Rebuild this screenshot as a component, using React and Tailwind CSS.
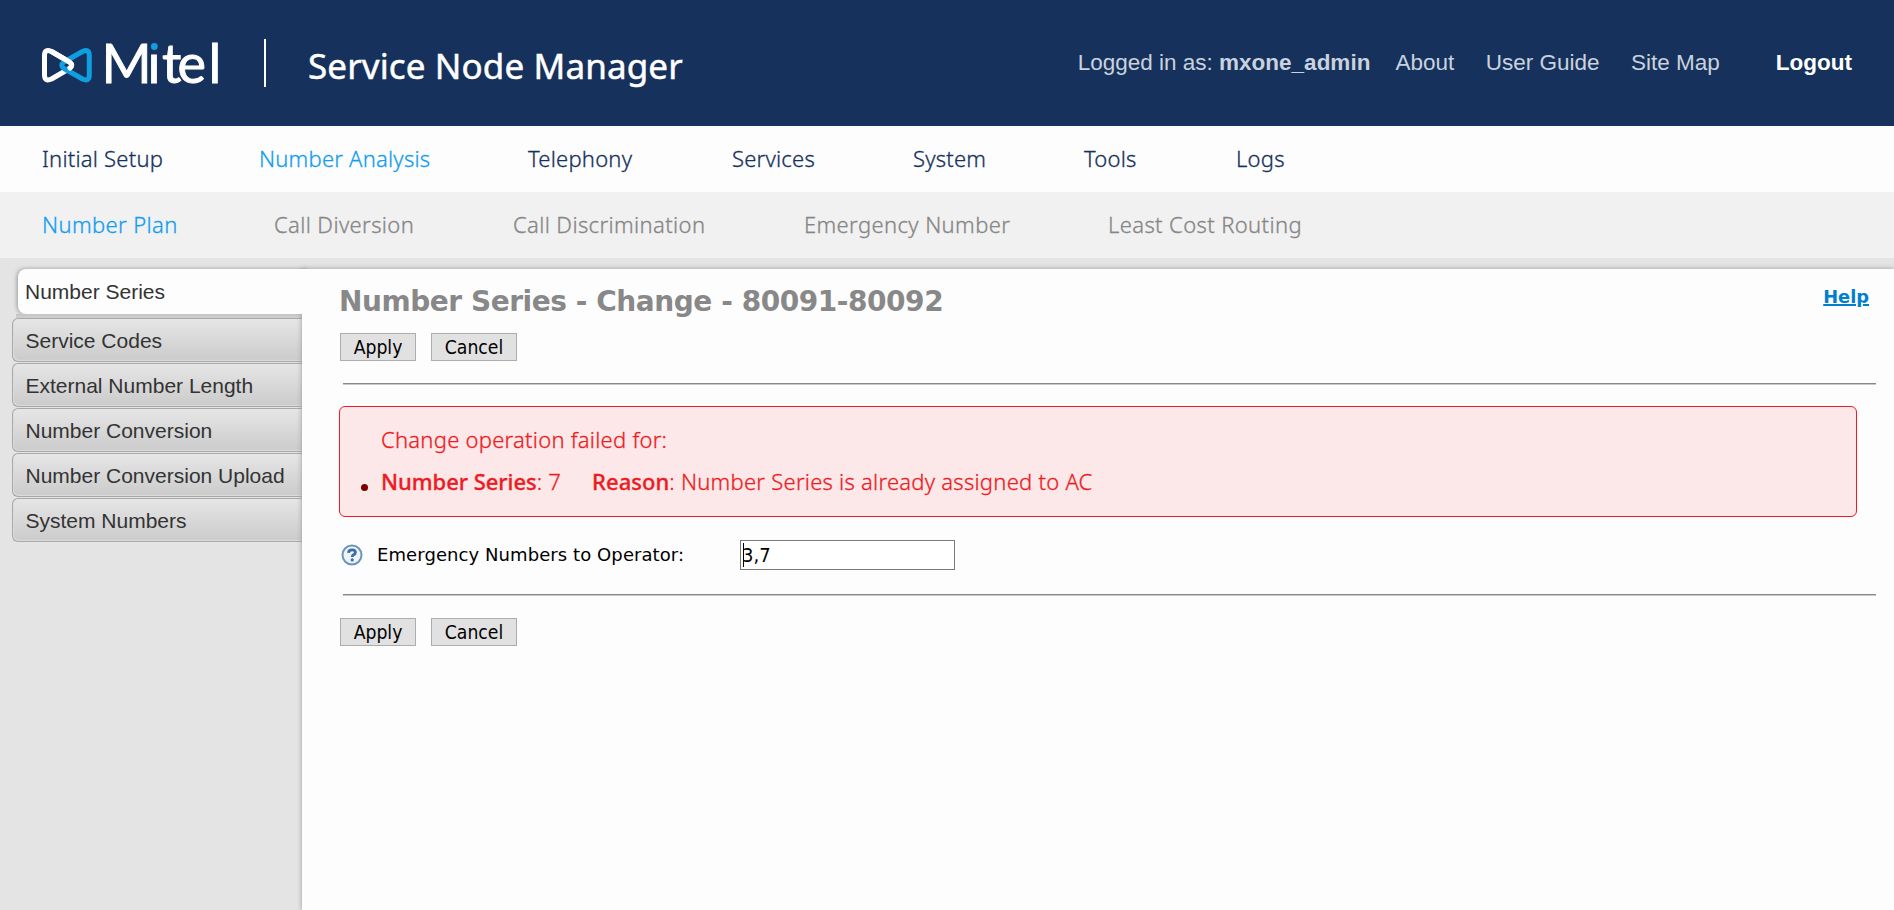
const PRIMARY = [
  { label: 'Initial Setup', width: 'w-[217px]' },
  { label: 'Number Analysis', width: 'w-[269px]', active: true },
  { label: 'Telephony', width: 'w-[204px]' },
  { label: 'Services', width: 'w-[181px]' },
  { label: 'System', width: 'w-[171px]' },
  { label: 'Tools', width: 'w-[152px]' },
  { label: 'Logs', width: 'w-[100px]' },
];

const SECONDARY = [
  { label: 'Number Plan', width: 'w-[232px]', active: true },
  { label: 'Call Diversion', width: 'w-[239px]' },
  { label: 'Call Discrimination', width: 'w-[291px]' },
  { label: 'Emergency Number', width: 'w-[304px]' },
  { label: 'Least Cost Routing', width: 'w-[260px]' },
];

const TABS = [
  'Service Codes',
  'External Number Length',
  'Number Conversion',
  'Number Conversion Upload',
  'System Numbers',
];

function Logo() {
  return (
    <svg width="184" height="64" viewBox="0 -6 184 64" fill="none" className="overflow-visible" aria-label="Mitel">
      <g strokeWidth="5" strokeLinejoin="round" strokeLinecap="round">
        <path d="M9.500 14.500 L27.500 25 Q32 28.300 27.500 31.500 L9.500 42 Q2.500 45 2.500 38 V18.500 Q2.500 11.500 9.500 14.500 Z" stroke="#fff" />
        <path d="M40.500 14.500 L22 25 Q17.500 28.300 22 31.500 L40.500 42 Q47.300 45 47.300 38 V18.500 Q47.300 11.500 40.500 14.500 Z" stroke="#0f9ee0" />
        <path d="M9.500 14.500 L27.500 25 Q31.500 28 28 31" stroke="#fff" />
      </g>
      <text
        x="59.500 105.500 120 135.500 166.500"
        y="45.500"
        fill="#fff"
        stroke="#fff"
        strokeWidth="0.900"
        className="font-['Lato',sans-serif] text-[54px]"
      >
        Mitel
      </text>
      <rect x="107" y="3" width="10.500" height="12" fill="#16325c" />
      <circle cx="112.300" cy="9.500" r="3.400" fill="#0f9ee0" />
    </svg>
  );
}

function Header() {
  return (
    <header className="flex h-[126px] items-center bg-[#16325c] pr-[42px] pl-[42px] font-['Liberation_Sans',Arial,sans-serif] text-[22.5px] text-[#c9d2de]">
      <Logo />
      <div className="ml-[38px] h-12 w-0.5 bg-white" />
      <h1 className="mt-[6px] ml-[42px] font-['Noto_Sans',sans-serif] text-[35px] tracking-[0.12px] whitespace-nowrap text-white [-webkit-text-stroke:0.5px]">
        Service Node Manager
      </h1>
      <div className="ml-auto flex whitespace-nowrap">
        <span>
          Logged in as: <b>mxone_admin</b>
        </span>
        <a className="ml-[25px]">About</a>
        <a className="ml-[31.5px]">User Guide</a>
        <a className="ml-[31.5px]">Site Map</a>
        <a className="ml-[56px] font-bold text-white">Logout</a>
      </div>
    </header>
  );
}

function Nav({ items, className, activeColor }) {
  return (
    <nav
      className={`flex h-[66px] pl-[42px] font-['Noto_Sans',sans-serif] text-[22px] leading-[64px] font-light whitespace-nowrap [-webkit-text-stroke:0.3px] ${className}`}
    >
      {items.map((item) => (
        <a key={item.label} className={`${item.width} ${item.active ? activeColor : ''}`}>
          {item.label}
        </a>
      ))}
    </nav>
  );
}

function Sidebar() {
  return (
    <aside className="w-[302px] shrink-0 pt-[11px] font-['Liberation_Sans',Arial,sans-serif] text-[21px] whitespace-nowrap text-[#333]">
      <div className="relative z-10 -mr-1.5 ml-[18px] h-[45px] rounded-l-lg bg-[#fdfdfd] pl-[7px] leading-[45px] shadow-[-1px_0_4px_#999] [clip-path:inset(-6px_0_0_-6px)]">
        Number Series
      </div>
      <div className="ml-4 h-1 bg-linear-to-b from-[#c4c4c4] to-[#d0d0d0]" />
      <div className="ml-3 flex flex-col gap-px">
        {TABS.map((tab) => (
          <div
            key={tab}
            className="h-11 rounded-l-md border border-r-0 border-[#a8a8a8] bg-linear-to-b from-[#e6e6e6] to-[#cbcbcb] pl-[12.5px] leading-[44px] shadow-[inset_1px_-1px_1px_#dcdcdc]"
          >
            {tab}
          </div>
        ))}
      </div>
    </aside>
  );
}

function Button({ children, className }) {
  return (
    <button
      className={`h-7 border border-[#adadad] bg-[#e1e1e1] pt-px font-['DejaVu_Sans_Condensed','DejaVu_Sans',sans-serif] text-[19.2px] leading-[25px] text-black ${className}`}
    >
      {children}
    </button>
  );
}

function Actions() {
  return (
    <div className="flex gap-[15px]">
      <Button className="w-[76px]">Apply</Button>
      <Button className="w-[86px]">Cancel</Button>
    </div>
  );
}

function Rule() {
  return <div className="ml-[3px] h-0.5 w-[1533px] border-t border-[#888] bg-[#c8c8c8]" />;
}

function Alert() {
  return (
    <div className="mt-[21px] -ml-px h-[111px] w-[1518px] rounded-md border border-[#ed1c24] bg-[#fce8e8] pl-[41px] font-['Noto_Sans',sans-serif] text-[22px] font-light tracking-[0.25px] whitespace-nowrap text-[#ed1c24] [-webkit-text-stroke:0.3px]">
      <p className="mt-[12px] h-[42px] leading-[40px]">Change operation failed for:</p>
      <div className="flex leading-[40px]">
        <span className="mt-[23px] mr-[13px] -ml-[20px] size-[7px] rounded-full bg-[#7a0000]" />
        <p className="w-[211px]">
          <b className="font-medium tracking-[-0.05px]">Number Series</b>: 7
        </p>
        <p>
          <b className="font-medium tracking-[0.05px]">Reason</b>: Number Series is already assigned to AC
        </p>
      </div>
    </div>
  );
}

function HelpIcon() {
  return (
    <svg width="22" height="22" viewBox="0 0 22 22" fill="none">
      <circle cx="11" cy="11" r="9.500" fill="#eef4f9" stroke="#6a95bd" strokeWidth="2" />
      <path d="M7.500 8.800 Q7.700 5.900 11.100 5.900 Q14.400 5.900 14.400 8.400 Q14.400 9.800 12.500 10.700 Q11.200 11.500 11.200 12.900" stroke="#3a6ea5" strokeWidth="2.800" />
      <circle cx="11.200" cy="15.900" r="1.600" fill="#3a6ea5" />
    </svg>
  );
}

export default function App() {
  return (
    <div className="flex h-[910px] flex-col overflow-hidden bg-[#e4e4e4]">
      <Header />
      <Nav items={PRIMARY} className="bg-[#fdfdfd] tracking-[0.22px] text-[#16325c]" activeColor="text-[#149df0]" />
      <Nav items={SECONDARY} className="bg-[#f1f1f1] tracking-[0.38px] text-[#868686]" activeColor="text-[#149df0]" />
      <div className="flex min-h-0 flex-1">
        <Sidebar />
        <main className="mt-[11px] flex-1 bg-[#fdfdfd] pl-[38px] shadow-[0_0_5px_#999]">
          <div className="flex h-16 items-start justify-between pr-[25px] font-['DejaVu_Sans',sans-serif] font-bold">
            <h2 className="-ml-px pt-[13px] text-[28px] leading-[40px] tracking-[-0.45px] whitespace-nowrap text-[#888]">
              Number Series - Change - 80091-80092
            </h2>
            <a className="pt-[16px] text-[17.8px] leading-6 text-[#0080cc] underline decoration-2 underline-offset-1">Help</a>
          </div>
          <Actions />
          <div className="h-[22px]" />
          <Rule />
          <Alert />
          <div className="mt-[23px] mb-[24px] flex h-[30px] items-center">
            <span className="ml-px">
              <HelpIcon />
            </span>
            <label className="ml-[14px] w-[363px] font-['DejaVu_Sans',sans-serif] text-[18px] leading-[30px] tracking-[0.08px] text-black">
              Emergency Numbers to Operator:
            </label>
            <div className="relative h-[30px] w-[215px] border border-[#7a7a7a] bg-white pl-px font-['DejaVu_Sans_Condensed','DejaVu_Sans',sans-serif] text-[20px] leading-[29px]">
              3,7
              <span className="absolute top-[2px] left-[2px] h-6 w-px bg-black" />
            </div>
          </div>
          <Rule />
          <div className="h-[22px]" />
          <Actions />
        </main>
      </div>
    </div>
  );
}
